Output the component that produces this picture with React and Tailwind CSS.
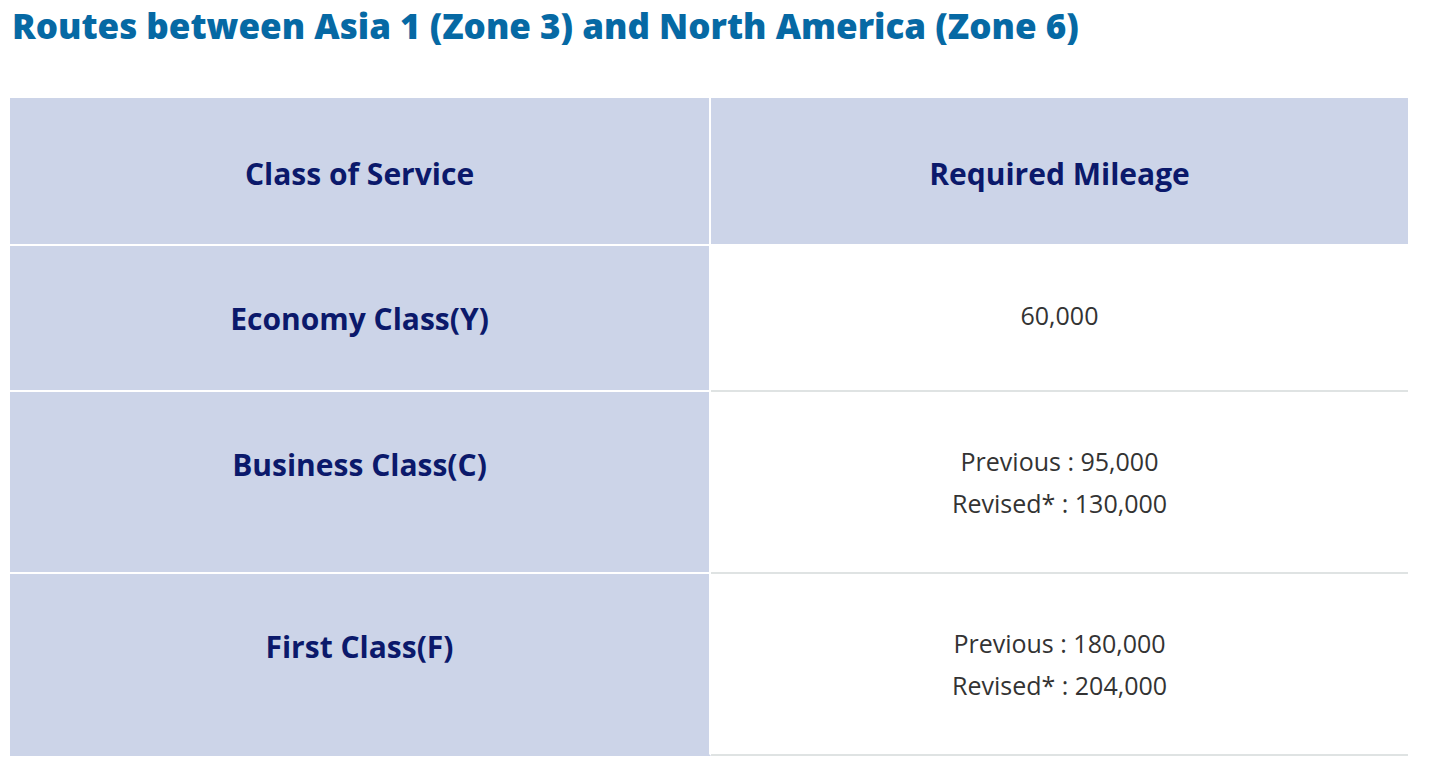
import React from "react";

const font = { fontFamily: '"Open Sans", "Noto Sans", sans-serif' };

function LeftCell({ children, last, header }) {
  return (
    <div
      className={`bg-[#ccd4e8] border-r-2 border-r-white border-b-2 ${last ? "border-b-[#ccd4e8]" : "border-b-white"} ${header ? "pt-[52px] pb-[46px]" : "pt-[49px] pb-[47px]"} text-center text-[30px] leading-[48px] font-bold text-[#0b196b]`}
    >
      {children}
    </div>
  );
}

function RightCell({ children }) {
  return (
    <div className="bg-white border-b-2 border-b-[#dfe3e3] py-[48px] text-center text-[25px] leading-[42px] text-[#333333]">
      {children}
    </div>
  );
}

export default function App() {
  return (
    <div className="bg-white w-[1431px] min-h-[763px]" style={font}>
      <h1 className="pl-[12px] pt-[4px] h-[98px] text-[35px] leading-[44px] font-extrabold text-[#0669a4]">
        Routes between Asia 1 (Zone 3) and North America (Zone 6)
      </h1>
      <div className="ml-[10px] w-[1398px] grid grid-cols-[701px_697px]">
        <LeftCell header>Class of Service</LeftCell>
        <div className="bg-[#ccd4e8] border-b-2 border-b-white pt-[52px] pb-[46px] text-center text-[30px] leading-[48px] font-bold text-[#0b196b]">
          Required Mileage
        </div>

        <LeftCell>Economy Class(Y)</LeftCell>
        <RightCell>60,000</RightCell>

        <LeftCell>Business Class(C)</LeftCell>
        <RightCell>
          <div>Previous : 95,000</div>
          <div>Revised* : 130,000</div>
        </RightCell>

        <LeftCell last>First Class(F)</LeftCell>
        <RightCell>
          <div>Previous : 180,000</div>
          <div>Revised* : 204,000</div>
        </RightCell>
      </div>
    </div>
  );
}
